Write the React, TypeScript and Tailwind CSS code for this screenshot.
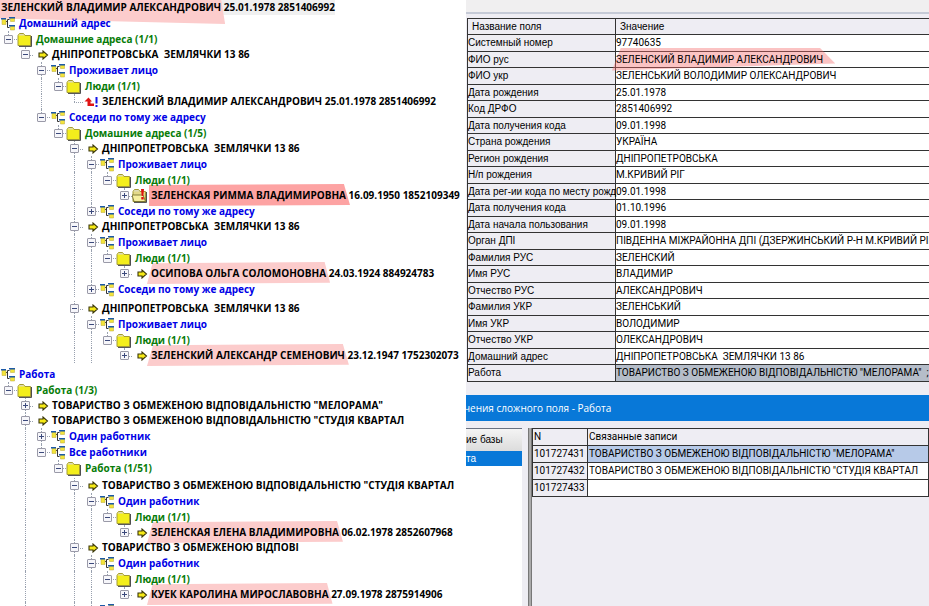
import clsx from "clsx";

type Kind = "root" | "link" | "folder" | "record" | "current" | "alert";

type TreeRow = {
  depth: number; // -1 is the top level, without a toggle column
  kind: Kind;
  name: string;
  info?: string;
  open?: boolean;
  more?: boolean; // the line goes on below the toggle
  lines?: number[];
  mark?: "first" | "soft" | "strong";
};

const ADDRESS = "ДНІПРОПЕТРОВСЬКА  ЗЕМЛЯЧКИ 13 86";
const TOV = "ТОВАРИСТВО З ОБМЕЖЕНОЮ ВІДПОВІДАЛЬНІСТЮ ";

const homeRows: TreeRow[] = [
  { depth: -1, kind: "root", name: "ЗЕЛЕНСКИЙ ВЛАДИМИР АЛЕКСАНДРОВИЧ", info: "25.01.1978 2851406992", mark: "first" },
  { depth: -1, kind: "link", name: "Домашний адрес" },
  { depth: 0, kind: "folder", name: "Домашние адреса (1/1)", open: true },
  { depth: 1, kind: "record", name: ADDRESS, open: true },
  { depth: 2, kind: "link", name: "Проживает лицо", open: true, more: true },
  { depth: 3, kind: "folder", name: "Люди (1/1)", open: true, lines: [2] },
  { depth: 4, kind: "current", name: "ЗЕЛЕНСКИЙ ВЛАДИМИР АЛЕКСАНДРОВИЧ 25.01.1978 2851406992", lines: [2] },
  { depth: 2, kind: "link", name: "Соседи по тому же адресу", open: true },
  { depth: 3, kind: "folder", name: "Домашние адреса (1/5)", open: true },
  { depth: 4, kind: "record", name: ADDRESS, open: true, more: true },
  { depth: 5, kind: "link", name: "Проживает лицо", open: true, more: true, lines: [4] },
  { depth: 6, kind: "folder", name: "Люди (1/1)", open: true, lines: [4, 5] },
  { depth: 7, kind: "alert", name: "ЗЕЛЕНСКАЯ РИММА ВЛАДИМИРОВНА", info: "16.09.1950 1852109349", open: false, lines: [4, 5], mark: "strong" },
  { depth: 5, kind: "link", name: "Соседи по тому же адресу", open: false, lines: [4] },
  { depth: 4, kind: "record", name: ADDRESS, open: true, more: true },
  { depth: 5, kind: "link", name: "Проживает лицо", open: true, more: true, lines: [4] },
  { depth: 6, kind: "folder", name: "Люди (1/1)", open: true, lines: [4, 5] },
  { depth: 7, kind: "record", name: "ОСИПОВА ОЛЬГА СОЛОМОНОВНА", info: "24.03.1924 884924783", open: false, lines: [4, 5], mark: "soft" },
  { depth: 5, kind: "link", name: "Соседи по тому же адресу", open: false, lines: [4] },
];

const neighbourRows: TreeRow[] = [
  { depth: 4, kind: "record", name: ADDRESS, open: true, more: true },
  { depth: 5, kind: "link", name: "Проживает лицо", open: true, more: true, lines: [4] },
  { depth: 6, kind: "folder", name: "Люди (1/1)", open: true, lines: [4, 5] },
  { depth: 7, kind: "record", name: "ЗЕЛЕНСКИЙ АЛЕКСАНДР СЕМЕНОВИЧ", info: "23.12.1947 1752302073", open: false, lines: [4, 5], mark: "soft" },
];

const workRows: TreeRow[] = [
  { depth: -1, kind: "link", name: "Работа" },
  { depth: 0, kind: "folder", name: "Работа (1/3)", open: true },
  { depth: 1, kind: "record", name: TOV + "\"МЕЛОРАМА\"", open: false, more: true },
  { depth: 1, kind: "record", name: TOV + "\"СТУДІЯ КВАРТАЛ", open: true, more: true },
  { depth: 2, kind: "link", name: "Один работник", open: false, more: true, lines: [1] },
  { depth: 2, kind: "link", name: "Все работники", open: true, lines: [1] },
  { depth: 3, kind: "folder", name: "Работа (1/51)", open: true, lines: [1] },
];

const staffRows: TreeRow[] = [
  { depth: 4, kind: "record", name: TOV + "\"СТУДІЯ КВАРТАЛ", open: true, more: true, lines: [1] },
  { depth: 5, kind: "link", name: "Один работник", open: true, more: true, lines: [1, 4] },
  { depth: 6, kind: "folder", name: "Люди (1/1)", open: true, lines: [1, 4, 5] },
  { depth: 7, kind: "record", name: "ЗЕЛЕНСКАЯ ЕЛЕНА ВЛАДИМИРОВНА", info: "06.02.1978 2852607968", open: false, lines: [1, 4, 5], mark: "soft" },
  { depth: 4, kind: "record", name: "ТОВАРИСТВО З ОБМЕЖЕНОЮ ВІДПОВІ", open: true, more: true, lines: [1] },
  { depth: 5, kind: "link", name: "Один работник", open: true, more: true, lines: [1, 4] },
  { depth: 6, kind: "folder", name: "Люди (1/1)", open: true, lines: [1, 4, 5] },
  { depth: 7, kind: "record", name: "КУЕК КАРОЛИНА МИРОСЛАВОВНА", info: "27.09.1978 2875914906", open: false, lines: [1, 4, 5], mark: "soft" },
  { depth: 5, kind: "link", name: "", lines: [1, 4] },
];

const fields: [string, string][] = [
  ["Системный номер", "97740635"],
  ["ФИО рус", "ЗЕЛЕНСКИЙ ВЛАДИМИР АЛЕКСАНДРОВИЧ"],
  ["ФИО укр", "ЗЕЛЕНСЬКИЙ ВОЛОДИМИР ОЛЕКСАНДРОВИЧ"],
  ["Дата рождения", "25.01.1978"],
  ["Код ДРФО", "2851406992"],
  ["Дата получения кода", "09.01.1998"],
  ["Страна рождения", "УКРАЇНА"],
  ["Регион рождения", "ДНІПРОПЕТРОВСЬКА"],
  ["Н/п рождения", "М.КРИВИЙ РІГ"],
  ["Дата рег-ии кода по месту рожд", "09.01.1998"],
  ["Дата получения кода", "01.10.1996"],
  ["Дата начала пользования", "09.01.1998"],
  ["Орган ДПІ", "ПІВДЕННА МІЖРАЙОННА ДПІ (ДЗЕРЖИНСЬКИЙ Р-Н М.КРИВИЙ РІГ"],
  ["Фамилия РУС", "ЗЕЛЕНСКИЙ"],
  ["Имя РУС", "ВЛАДИМИР"],
  ["Отчество РУС", "АЛЕКСАНДРОВИЧ"],
  ["Фамилия УКР", "ЗЕЛЕНСЬКИЙ"],
  ["Имя УКР", "ВОЛОДИМИР"],
  ["Отчество УКР", "ОЛЕКСАНДРОВИЧ"],
  ["Домашний адрес", ADDRESS],
  ["Работа", TOV + "\"МЕЛОРАМА\"  ;"],
];

const records: [string, string][] = [
  ["101727431", TOV + "\"МЕЛОРАМА\""],
  ["101727432", TOV + "\"СТУДІЯ КВАРТАЛ"],
  ["101727433", ""],
];

function LinkIcon() {
  return (
    <svg width="16" height="15" viewBox="0 0 16 15" aria-hidden="true">
      <path d="M6 5.500h1.500M9.500 3.500h-2v8h2" fill="none" stroke="#333" />
      <path d="M2 3h4v5.500H2zM10.500 2h4v3.500h-4zM10.500 10h4v4h-4z" fill="#f3e43a" stroke="#b9a73a" strokeWidth=".5" />
      <path d="M1 2h5v1.500H1zM9 1h6v1.500H9zM9 9h6v1.500H9z" fill="#1c5aa8" />
    </svg>
  );
}

function FolderIcon({ alert }: { alert?: boolean }) {
  return (
    <svg width="16" height="15" viewBox="0 0 16 15" aria-hidden="true">
      <path d="M2 14.200h12.200V4" fill="none" stroke="#222" strokeWidth="1.200" />
      <path d="M1 3.500 2.500 1.500h4L8 3.500h5.500v10H1z" fill={alert ? "#e3d98a" : "#f3ee1c"} stroke="#a39b35" />
      <path d="M1.500 3.500 2.800 2h3.500l1.200 1.500z" fill="#ddd9b8" />
      {alert && <path d="M0 7h11l2.500 6.500H2z" fill="#f6efa0" stroke="#6b6425" strokeWidth=".8" />}
      {alert && <path d="M9 1h3l-.7 7H9.700zM9.300 9h2.400v2.500H9.300z" fill="#e01010" />}
    </svg>
  );
}

function ArrowIcon() {
  return (
    <svg width="11" height="10" viewBox="0 0 11 10" className="ml-[5px]" aria-hidden="true">
      <path d="M1 3h4V1l4.500 4L5 9V7H1z" fill="#f6ea16" stroke="#3a3608" strokeWidth="1.100" />
    </svg>
  );
}

function CurrentIcon() {
  return (
    <svg width="16" height="12" viewBox="0 0 16 12" aria-hidden="true">
      <path d="M1.500 5.500 5.500 1.500 9 5.500H7.500v2H11V10H4.500V5.500z" fill="#e01414" />
      <path d="M12.500 1h2v6.500h-2zM12.500 9h2v2h-2z" fill="#1414e8" />
    </svg>
  );
}

function RowIcon({ kind }: { kind: Kind }) {
  if (kind === "link") return <LinkIcon />;
  if (kind === "folder") return <FolderIcon />;
  if (kind === "alert") return <FolderIcon alert />;
  if (kind === "current") return <CurrentIcon />;
  return <ArrowIcon />;
}

function Toggle({ row }: { row: TreeRow }) {
  return (
    <span className={clsx("relative flex shrink-0 items-center self-stretch pl-1", row.depth % 2 ? "w-4" : "w-[17px]")}>
      <span className={clsx("absolute left-2 top-0 border-l border-dotted border-gray-400", row.more ? "bottom-0" : "bottom-1/2")} />
      <span className="absolute left-2 right-0 top-1/2 border-t border-dotted border-gray-400" />
      {row.open !== undefined && (
        <button
          type="button"
          aria-label={row.open ? "Свернуть" : "Развернуть"}
          className="relative size-[9px] rounded-[1px] border border-[#9a9aa8] bg-[#f6f6fa]"
        >
          <span className="absolute inset-x-px top-[3px] h-px bg-[#3c4a7c]" />
          {!row.open && <span className="absolute inset-y-px left-[3px] w-px bg-[#3c4a7c]" />}
        </button>
      )}
    </span>
  );
}

function TreeItem({ row }: { row: TreeRow }) {
  const columns = Array.from({ length: Math.max(row.depth, 0) }, (_, i) => i);
  const isLabel = row.kind === "link" || row.kind === "folder";

  return (
    <li className={clsx("flex items-center", isLabel ? "h-4" : "h-[15px]")}>
      {columns.map((c) => (
        <span key={c} className={clsx("relative shrink-0 self-stretch", c % 2 ? "w-4" : "w-[17px]")}>
          {row.lines?.includes(c) && (
            <span className="absolute inset-y-0 left-2 border-l border-dotted border-gray-400" />
          )}
        </span>
      ))}
      {row.depth >= 0 && <Toggle row={row} />}
      {row.kind !== "root" && (
        <span className="flex w-[18px] shrink-0 items-center">
          <RowIcon kind={row.kind} />
        </span>
      )}
      <span
        className={clsx(
          "relative whitespace-pre pl-px",
          row.kind === "link" && "text-[#0000e6]",
          row.kind === "folder" && "text-[#087c08]"
        )}
      >
        {row.kind === "root" && <span className="absolute inset-0 -z-20 bg-[#f0f0f0]" />}
        <span className="relative">
          {row.mark && (
            <span
              className={clsx(
                "absolute -inset-x-1 -top-1 -z-10",
                row.mark === "first" && "-bottom-2.5 bg-[#fccccc] [clip-path:polygon(0_0,98%_0,100%_100%,0_80%)]",
                row.mark === "soft" && "-bottom-1 bg-[#fccccc] [clip-path:polygon(3%_6%,97%_0,100%_94%,0_100%)]",
                row.mark === "strong" && "-bottom-1 bg-[#fda3a3] [clip-path:polygon(1%_5%,97%_0,100%_95%,1%_100%)]"
              )}
            />
          )}
          {row.name}
        </span>
        {row.info && " " + row.info}
      </span>
    </li>
  );
}

function Tree({ rows, className }: { rows: TreeRow[]; className?: string }) {
  return (
    <ul className={className}>
      {rows.map((row, i) => (
        <TreeItem key={i} row={row} />
      ))}
    </ul>
  );
}

function FieldTable() {
  return (
    <table className="ml-px w-full table-fixed border-collapse border border-[#333] text-left">
      <colgroup>
        <col className="w-[148px]" />
        <col />
      </colgroup>
      <thead>
        <tr className="h-4">
          <th className="border border-[#333] p-0 pl-1 font-normal">Название поля</th>
          <th className="border border-[#333] p-0 pl-1 font-normal">Значение</th>
        </tr>
      </thead>
      <tbody>
        {fields.map(([name, value], i) => (
          <tr key={i} className={i % 2 ? "h-4" : "h-[17px]"}>
            <th className="whitespace-nowrap border border-[#333] p-0 font-normal">{name}</th>
            <td
              className={clsx(
                "whitespace-pre border border-[#333] p-0 font-['Roboto',sans-serif]",
                i === fields.length - 1 ? "bg-[#b5bdc9]" : "bg-white"
              )}
            >
              {i === 1 ? (
                <span className="relative isolate">
                  <span className="absolute -bottom-1.5 -left-1 -right-3 -top-1.5 -z-10 bg-[#f46a6a]/40 [clip-path:polygon(4%_0,93%_0,100%_70%,0_100%)]" />
                  {value}
                </span>
              ) : (
                value
              )}
            </td>
          </tr>
        ))}
      </tbody>
    </table>
  );
}

function RecordTable() {
  return (
    <table className="w-full table-fixed border-collapse border border-[#333] text-left font-['Roboto',sans-serif]">
      <colgroup>
        <col className="w-[55px]" />
        <col />
      </colgroup>
      <thead>
        <tr className="h-[17px]">
          <th className="border border-[#333] p-0 pl-px font-normal">N</th>
          <th className="border border-[#333] p-0 pl-px font-normal">Связанные записи</th>
        </tr>
      </thead>
      <tbody>
        {records.map(([id, name], i) => (
          <tr key={id} className="h-[17px]">
            <th className="border border-[#333] p-0 pl-px font-normal">{id}</th>
            <td className={clsx("whitespace-pre border border-[#333] p-0 pl-px", i === 0 ? "bg-[#b7cae8]" : "bg-white")}>
              {name}
            </td>
          </tr>
        ))}
      </tbody>
    </table>
  );
}

export default function App() {
  return (
    <main className="flex h-screen overflow-hidden bg-white text-black">
      <section className="isolate w-[466px] shrink-0 overflow-hidden font-['Open_Sans','Noto_Sans',sans-serif] text-[10px]/[15px] font-bold">
        <Tree rows={homeRows} />
        <Tree rows={neighbourRows} className="pt-1" />
        <Tree rows={workRows} className="pt-[3px]" />
        <Tree rows={staffRows} className="pt-0.5" />
      </section>

      <section className="flex min-w-0 flex-1 flex-col overflow-hidden bg-[#eeedf3] font-['Liberation_Sans',Arial,sans-serif] text-[10px]/[14px]">
        <div className="mb-1 h-[14px] shrink-0 border-b-2 border-[#c5cad6] bg-[#f0eff0]" />
        <FieldTable />
        <h2 className="mb-[7px] mt-[13px] h-[26px] shrink-0 whitespace-nowrap bg-[#0878d8] -indent-0.5 font-['Open_Sans',sans-serif] leading-[26px] text-white">
          чения сложного поля - Работа
        </h2>
        <div className="flex min-h-0 flex-1">
          <div className="flex w-[56px] shrink-0 flex-col border-t border-gray-500 bg-white">
            <button type="button" className="h-[22px] bg-linear-to-b from-[#f4f4f4] to-[#dcdcdc] text-left">
              ие базы
            </button>
            <button type="button" className="h-[15px] bg-[#0878d8] text-left text-white">
              та
            </button>
          </div>
          <div className="ml-1.5 w-1 shrink-0 border-x border-[#777] bg-[#aaa]" />
          <div className="min-w-0 flex-1">
            <RecordTable />
          </div>
        </div>
      </section>
    </main>
  );
}
